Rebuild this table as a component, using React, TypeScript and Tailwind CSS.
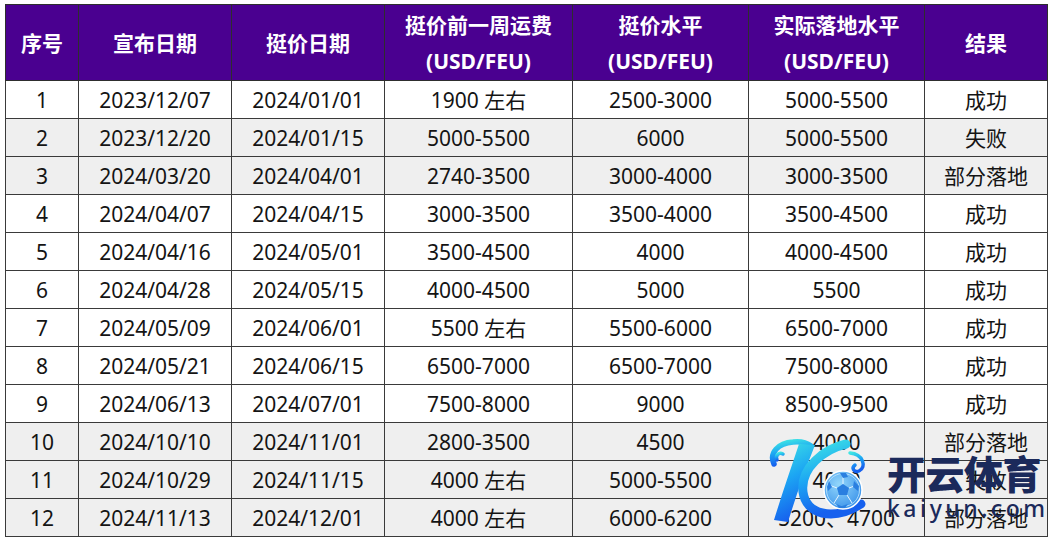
const headers = [
  ["序号"],
  ["宣布日期"],
  ["挺价日期"],
  ["挺价前一周运费", "(USD/FEU)"],
  ["挺价水平", "(USD/FEU)"],
  ["实际落地水平", "(USD/FEU)"],
  ["结果"],
];

const widths = ["w-[73px]", "w-[153px]", "w-[153px]", "w-[188px]", "w-[176px]", "w-[176px]", "w-[123px]"];

const rows = [
  ["1", "2023/12/07", "2024/01/01", "1900 左右", "2500-3000", "5000-5500", "成功"],
  ["2", "2023/12/20", "2024/01/15", "5000-5500", "6000", "5000-5500", "失败"],
  ["3", "2024/03/20", "2024/04/01", "2740-3500", "3000-4000", "3000-3500", "部分落地"],
  ["4", "2024/04/07", "2024/04/15", "3000-3500", "3500-4000", "3500-4500", "成功"],
  ["5", "2024/04/16", "2024/05/01", "3500-4500", "4000", "4000-4500", "成功"],
  ["6", "2024/04/28", "2024/05/15", "4000-4500", "5000", "5500", "成功"],
  ["7", "2024/05/09", "2024/06/01", "5500 左右", "5500-6000", "6500-7000", "成功"],
  ["8", "2024/05/21", "2024/06/15", "6500-7000", "6500-7000", "7500-8000", "成功"],
  ["9", "2024/06/13", "2024/07/01", "7500-8000", "9000", "8500-9500", "成功"],
  ["10", "2024/10/10", "2024/11/01", "2800-3500", "4500", "4000", "部分落地"],
  ["11", "2024/10/29", "2024/11/15", "4000 左右", "5000-5500", "4000", "失败"],
  ["12", "2024/11/13", "2024/12/01", "4000 左右", "6000-6200", "5200、4700", "部分落地"],
];

// rows that are not a clean success get the grey fill
const shaded = new Set([2, 3, 10, 11, 12]);

function Watermark() {
  return (
    <div className="absolute left-[768px] top-[438px] flex items-start">
      <svg width="106" height="96" viewBox="0 0 106 96">
        <defs>
          <linearGradient id="kg" x1="0" y1="0" x2="0.3" y2="1">
            <stop offset="0" stopColor="#3fe6e4" />
            <stop offset="0.5" stopColor="#1ca6f3" />
            <stop offset="1" stopColor="#1660ee" />
          </linearGradient>
          <radialGradient id="bg" cx="0.4" cy="0.35" r="0.7">
            <stop offset="0" stopColor="#93d7fb" />
            <stop offset="1" stopColor="#3a92ea" />
          </radialGradient>
        </defs>
        <path d="M6 26 C1 15 10 5 25 4 C33 3 39 5 43 8" fill="none" stroke="url(#kg)" strokeWidth="5.5" strokeLinecap="round" />
        <path d="M9 22 C7 17 11 14 15 16" fill="none" stroke="url(#kg)" strokeWidth="3.5" strokeLinecap="round" />
        <path d="M31 6 L47 7 C37 32 28 58 20 84 L6 82 C14 56 23 30 31 6 Z" fill="url(#kg)" />
        <path d="M78 6 C56 11 32 30 35 54 C38 76 64 84 93 66" fill="none" stroke="url(#kg)" strokeWidth="9" strokeLinecap="round" />
        <path d="M82 15 C95 16 99 29 91 33 C86 35 83 30 87 27" fill="none" stroke="url(#kg)" strokeWidth="3.5" strokeLinecap="round" />
        <circle cx="75" cy="52" r="19" fill="url(#bg)" stroke="#ffffff" strokeWidth="1.5" />
        <circle cx="75" cy="52" r="16.5" fill="none" stroke="#c4e8fd" strokeWidth="0.8" />
        <path d="M75 46 L81 50 L79 57 L71 57 L69 50 Z" fill="#2a7fe0" />
        <path d="M75 46 L75 37 M81 50 L89 47 M79 57 L84 65 M71 57 L66 65 M69 50 L61 47" stroke="#e6f5ff" strokeWidth="1" />
        <path d="M72 35 L78 35 L80 39 L75 40 Z M86 43 L91 48 L90 53 L85 49 Z M61 43 L59 49 L60 53 L64 49 Z M68 66 L74 68 L80 66 L77 70 L71 70 Z" fill="#2a7fe0" />
      </svg>
      <div className="ml-[13px] mt-[12px] flex flex-col">
        <div className="text-[39px] leading-[44px] font-black tracking-[-0.5px] text-[#1b2a5b] font-['Noto_Sans_CJK_SC',sans-serif]">
          开云体育
        </div>
        <div className="mt-[2px] text-[23px] leading-[24px] tracking-[3.5px] font-medium text-[#1b2a5b] font-['Noto_Sans',sans-serif]">
          kaiyun.com
        </div>
      </div>
    </div>
  );
}

export default function App() {
  return (
    <div className="relative w-[1056px] h-[541px] bg-white overflow-hidden font-['Noto_Sans','Noto_Sans_CJK_SC',sans-serif]">
      <table className="ml-[5px] mt-[4px] w-[1042px] table-fixed border-collapse">
        <thead>
          <tr className="h-[76px] bg-[#4a0090]">
            {headers.map((lines, i) => (
              <th
                key={i}
                className={`${widths[i]} p-0 border border-[#2e2e2e] text-white text-[21px] leading-[36px] font-bold text-center align-middle`}
              >
                {lines.map((l) => (
                  <div key={l}>{l}</div>
                ))}
              </th>
            ))}
          </tr>
        </thead>
        <tbody>
          {rows.map((r) => (
            <tr key={r[0]} className={`h-[38px] ${shaded.has(Number(r[0])) ? "bg-[#efefef]" : "bg-white"}`}>
              {r.map((c, j) => (
                <td key={j} className="p-0 border border-[#3a3a3a] text-[21px] leading-[30px] text-[#141414] text-center align-middle whitespace-nowrap">
                  {c}
                </td>
              ))}
            </tr>
          ))}
        </tbody>
      </table>
      <Watermark />
    </div>
  );
}
